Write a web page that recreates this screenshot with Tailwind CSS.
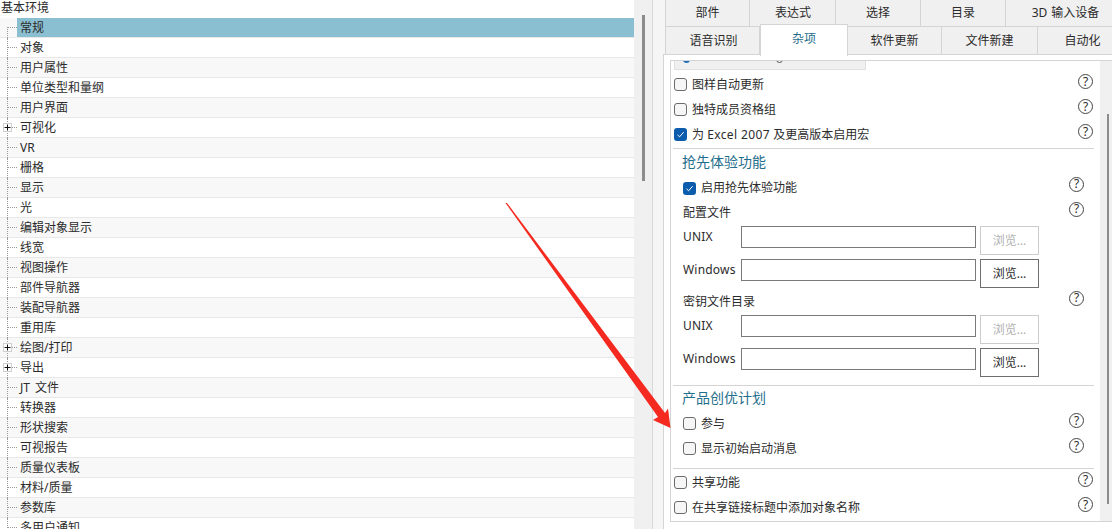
<!DOCTYPE html>
<html lang="zh-CN">
<head>
  <meta charset="utf-8" />
  <title>用户默认设置</title>
  <script src="https://cdn.jsdelivr.net/npm/@tailwindcss/browser@4"></script>
</head>
<body class="bg-white text-[#2b2b2b] text-[12px] font-['Noto_Sans','Noto_Sans_CJK_SC',sans-serif] overflow-hidden">
  <div class="relative flex w-[1112px] h-[529px] overflow-hidden">

    <!-- tree -->
    <div class="w-[634px] shrink-0">
      <div class="h-[18px] leading-[15px] pl-[1px]">基本环境</div>
      <div id="tree"></div>
    </div>

    <!-- tree scrollbar -->
    <div class="w-[18px] shrink-0 bg-[#f0f0f0] pt-[15px] flex justify-center">
      <div class="w-[3px] h-[166px] bg-[#8c8c8c]"></div>
    </div>

    <!-- right side -->
    <div class="flex-1 flex flex-col min-w-0 border-l border-[#d9d9d9] bg-[#f5f5f5]">
      <!-- tabs -->
      <div class="h-[27px] flex pl-[12px] shrink-0">
        <div class="w-[85px] shrink-0 flex items-center justify-center bg-[#f0f0f0] border-x border-b border-[#d4d4d4]">部件</div>
        <div class="w-[86px] shrink-0 pl-[1px] flex items-center justify-center bg-[#f0f0f0] border-r border-b border-[#d4d4d4]">表达式</div>
        <div class="w-[85px] shrink-0 flex items-center justify-center bg-[#f0f0f0] border-r border-b border-[#d4d4d4]">选择</div>
        <div class="w-[85px] shrink-0 flex items-center justify-center bg-[#f0f0f0] border-r border-b border-[#d4d4d4]">目录</div>
        <div class="w-[120px] shrink-0 flex items-center justify-center bg-[#f0f0f0] border-r border-b border-[#d4d4d4] [word-spacing:1px]">3D 输入设备</div>
      </div>
      <div class="h-[27px] flex pl-[12px] shrink-0">
        <div class="w-[95px] shrink-0 pl-[2px] flex items-center justify-center bg-[#f0f0f0] border-x border-[#d4d4d4]">语音识别</div>
        <div class="relative z-10 w-[88px] h-[32px] -mt-[3px] pb-[3px] shrink-0 flex items-center justify-center bg-white border-x border-t border-[#d4d4d4] text-[#1f6e8c]">杂项</div>
        <div class="w-[94px] shrink-0 flex items-center justify-center bg-[#f0f0f0] border-r border-[#d4d4d4]">软件更新</div>
        <div class="w-[96px] shrink-0 flex items-center justify-center bg-[#f0f0f0] border-r border-[#d4d4d4]">文件新建</div>
        <div class="w-[89px] shrink-0 flex items-center justify-center bg-[#f0f0f0]">自动化</div>
      </div>

      <!-- panel -->
      <div class="flex-1 ml-[10px] bg-white border-l border-t border-[#d4d4d4] pl-[6px] pt-[5px] pb-[7px]">
        <div class="h-full flex border-l border-t border-b border-[#d4d4d4]">
          <div class="w-[429px] shrink-0">
            <div class="relative ml-[3px] w-[192px] h-[9px] bg-[#f0f0f0] border border-t-0 border-[#e0e0e0] overflow-hidden">
              <div class="absolute left-[8px] -top-[5px] w-[7px] h-[7px] rounded-full bg-[#1a6fb5]"></div>
              <div class="absolute left-[101px] -top-[5px] w-[7px] h-[7px] rounded-full border border-[#555]"></div>
            </div>

            <div class="mt-[2px] pl-[3px] pr-[7px]">
              <div class="h-[25px] flex items-center">
                <span class="w-[13px] h-[13px] rounded-[3px] border border-[#6b6b6b] bg-[#f6f6f6]"></span>
                <span class="ml-[5px] flex-1">图样自动更新</span>
                <span class="w-[15px] h-[15px] mb-[6px] rounded-full border border-[#444] flex items-center justify-center text-[12px] leading-none">?</span>
              </div>
              <div class="h-[25px] flex items-center">
                <span class="w-[13px] h-[13px] rounded-[3px] border border-[#6b6b6b] bg-[#f6f6f6]"></span>
                <span class="ml-[5px] flex-1">独特成员资格组</span>
                <span class="w-[15px] h-[15px] mb-[6px] rounded-full border border-[#444] flex items-center justify-center text-[12px] leading-none">?</span>
              </div>
              <div class="h-[25px] flex items-center">
                <span class="w-[13px] h-[13px] rounded-[3px] bg-[#0b5cad] flex items-center justify-center">
                  <svg width="9" height="9" viewBox="0 0 9 9" fill="none" stroke="#fff" stroke-width="1"><path d="M1.5 4.8 3.6 6.8 7.6 2.2" /></svg>
                </span>
                <span class="ml-[5px] flex-1">为 <span class="tracking-[0.4px]">Excel 2007</span> 及更高版本启用宏</span>
                <span class="w-[15px] h-[15px] mb-[6px] rounded-full border border-[#444] flex items-center justify-center text-[12px] leading-none">?</span>
              </div>
            </div>

            <div class="mt-[1px] ml-[2px] mr-[6px] h-[1px] bg-[#d4d4d4]"></div>

            <div class="pl-[11px] pr-[16px]">
              <div class="h-[26px] pb-[2px] flex items-center text-[14px] text-[#1f6e8c]">抢先体验功能</div>
              <div class="h-[24px] mt-[1px] ml-[1px] flex items-center">
                <span class="w-[13px] h-[13px] rounded-[3px] bg-[#0b5cad] flex items-center justify-center">
                  <svg width="9" height="9" viewBox="0 0 9 9" fill="none" stroke="#fff" stroke-width="1"><path d="M1.5 4.8 3.6 6.8 7.6 2.2" /></svg>
                </span>
                <span class="ml-[5px] flex-1">启用抢先体验功能</span>
                <span class="w-[15px] h-[15px] mb-[8px] rounded-full border border-[#444] flex items-center justify-center text-[12px] leading-none">?</span>
              </div>
              <div class="h-[26px] ml-[1px] flex items-center">
                <span class="flex-1">配置文件</span>
                <span class="w-[15px] h-[15px] mb-[8px] rounded-full border border-[#444] flex items-center justify-center text-[12px] leading-none">?</span>
              </div>
              <div class="h-[33px] ml-[1px] flex items-start">
                <span class="w-[58px] h-[22px] leading-[22px] tracking-[0.2px]">UNIX</span>
                <div class="w-[235px] h-[22px] border border-[#7a7a7a]"></div>
                <button class="ml-[4px] w-[59px] h-[29px] border border-[#cccccc] text-[#b0b0b0]">浏览...</button>
              </div>
              <div class="h-[33px] ml-[1px] flex items-start">
                <span class="w-[58px] h-[22px] leading-[22px] tracking-[0.2px]">Windows</span>
                <div class="w-[235px] h-[22px] border border-[#7a7a7a]"></div>
                <button class="ml-[4px] w-[59px] h-[29px] border border-[#6f6f6f]">浏览...</button>
              </div>
              <div class="h-[23px] ml-[1px] pb-[3px] flex items-center">
                <span class="flex-1">密钥文件目录</span>
                <span class="w-[15px] h-[15px] mb-[8px] rounded-full border border-[#444] flex items-center justify-center text-[12px] leading-none">?</span>
              </div>
              <div class="h-[33px] ml-[1px] flex items-start">
                <span class="w-[58px] h-[22px] leading-[22px] tracking-[0.2px]">UNIX</span>
                <div class="w-[235px] h-[22px] border border-[#7a7a7a]"></div>
                <button class="ml-[4px] w-[59px] h-[29px] border border-[#cccccc] text-[#b0b0b0]">浏览...</button>
              </div>
              <div class="h-[33px] ml-[1px] flex items-start">
                <span class="w-[58px] h-[22px] leading-[22px] tracking-[0.2px]">Windows</span>
                <div class="w-[235px] h-[22px] border border-[#7a7a7a]"></div>
                <button class="ml-[4px] w-[59px] h-[29px] border border-[#6f6f6f]">浏览...</button>
              </div>
            </div>

            <div class="mt-[4px] ml-[2px] mr-[6px] h-[1px] bg-[#d4d4d4]"></div>

            <div class="pl-[11px] pr-[16px]">
              <div class="h-[25px] pb-[2px] flex items-center text-[14px] text-[#1f6e8c]">产品创优计划</div>
              <div class="h-[25px] ml-[1px] flex items-center">
                <span class="w-[13px] h-[13px] rounded-[3px] border border-[#6b6b6b] bg-[#f6f6f6]"></span>
                <span class="ml-[5px] flex-1">参与</span>
                <span class="w-[15px] h-[15px] mb-[6px] rounded-full border border-[#444] flex items-center justify-center text-[12px] leading-none">?</span>
              </div>
              <div class="h-[25px] ml-[1px] flex items-center">
                <span class="w-[13px] h-[13px] rounded-[3px] border border-[#6b6b6b] bg-[#f6f6f6]"></span>
                <span class="ml-[5px] flex-1">显示初始启动消息</span>
                <span class="w-[15px] h-[15px] mb-[6px] rounded-full border border-[#444] flex items-center justify-center text-[12px] leading-none">?</span>
              </div>
            </div>

            <div class="mt-[7px] ml-[2px] mr-[6px] h-[1px] bg-[#d4d4d4]"></div>

            <div class="mt-[1px] pl-[3px] pr-[7px]">
              <div class="h-[25px] flex items-center">
                <span class="w-[13px] h-[13px] rounded-[3px] border border-[#6b6b6b] bg-[#f6f6f6]"></span>
                <span class="ml-[5px] flex-1">共享功能</span>
                <span class="w-[15px] h-[15px] mb-[6px] rounded-full border border-[#444] flex items-center justify-center text-[12px] leading-none">?</span>
              </div>
              <div class="h-[25px] flex items-center">
                <span class="w-[13px] h-[13px] rounded-[3px] border border-[#6b6b6b] bg-[#f6f6f6]"></span>
                <span class="ml-[5px] flex-1">在共享链接标题中添加对象名称</span>
                <span class="w-[15px] h-[15px] mb-[6px] rounded-full border border-[#444] flex items-center justify-center text-[12px] leading-none">?</span>
              </div>
            </div>
          </div>

          <!-- panel scrollbar -->
          <div class="flex-1 bg-[#f0f0f0] pt-[53px] pl-[7px]">
            <div class="w-[2px] h-[390px] bg-[#8c8c8c]"></div>
          </div>
        </div>
      </div>
    </div>

    <!-- red annotation arrow -->
    <svg class="absolute left-0 top-0 pointer-events-none" width="1112" height="529" viewBox="0 0 1112 529">
      <path d="M505.500 203 507 203 665 413 668 408.500 670.500 428 653 420 658 417Z" fill="#f4291f" />
    </svg>
  </div>

  <script>
    const items = ['常规','对象','用户属性','单位类型和量纲','用户界面','可视化','VR','栅格','显示','光','编辑对象显示','线宽','视图操作','部件导航器','装配导航器','重用库','绘图/打印','导出','JT 文件','转换器','形状搜索','可视报告','质量仪表板','材料/质量','参数库','多用户通知'];
    const expandable = ['可视化','绘图/打印','导出'];
    const tree = document.getElementById('tree');
    items.forEach((name, i) => {
      const row = document.createElement('div');
      const rowBg = i % 2 ? 'bg-white' : 'bg-[#f8f8f8]';
      const plus = expandable.includes(name)
        ? `<span class="absolute left-[3px] top-[5px] w-[9px] h-[9px] border border-[#cfcfcf] bg-white flex items-center justify-center">
             <svg width="7" height="7" viewBox="0 0 7 7" stroke="#111" stroke-width="1"><path d="M0.500 3.500H6.500M3.500 0.500V6.500" /></svg>
           </span>`
        : '';
      const label = i === 0 ? 'bg-[#8abfd1]' : '';
      const line = i === 0 ? 'top-[9px]' : 'top-0';
      row.className = `h-5 flex border-b border-[#e8e8e8] ${rowBg}`;
      row.innerHTML = `
        <div class="relative w-[17px] h-5 shrink-0">
          <span class="absolute left-[7px] ${line} bottom-0 border-l border-dotted border-[#9a9a9a]"></span>
          <span class="absolute left-[8px] top-[9px] w-[9px] border-t border-dotted border-[#9a9a9a]"></span>
          ${plus}
        </div>
        <div class="flex-1 h-[19px] leading-[19px] pl-[3px] [word-spacing:2px] ${label}">${name}</div>`;
      tree.appendChild(row);
    });
  </script>
</body>
</html>
